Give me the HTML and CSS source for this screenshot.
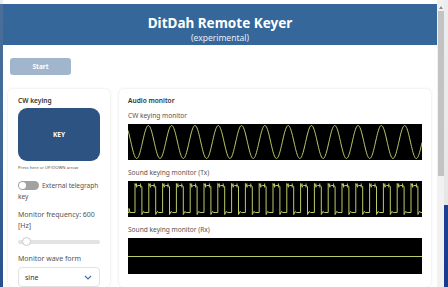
FILE: index.html
```html
<!DOCTYPE html>
<html lang="en">
  <head>
    <meta charset="UTF-8" />
    <meta name="viewport" content="width=device-width, initial-scale=1.0" />
    <title>DitDah Remote Keyer</title>
    <link rel="stylesheet" href="styles.css">
  </head>
  <body>
    <div class="desk">
      <div class="edge-left"></div>
      <div class="win">
        <header class="hero">
          <h1>DitDah Remote Keyer</h1>
          <p>(experimental)</p>
        </header>
        <main class="content">
          <button class="start">Start</button>
          <div class="panels">
            <section class="card side">
              <h2>CW keying</h2>
              <button class="key">KEY</button>
              <p class="hint">Press here or UP/DOWN arrow</p>
              <label class="toggle-row"><span class="toggle"><span class="knob"></span></span>External telegraph key</label>
              <p class="field">Monitor frequency: 600 [Hz]</p>
              <div class="range"><span class="thumb"></span></div>
              <p class="field">Monitor wave form</p>
              <div class="select">
                <span>sine</span>
                <svg width="8" height="5" viewBox="0 0 8 5"><path d="M1 1l3 3 3-3" fill="none" stroke="#4a6fa5" stroke-width="1.2"/></svg>
              </div>
            </section>
            <section class="card monitor">
              <h2>Audio monitor</h2>
              <div class="scope">
                <p>CW keying monitor</p>
                <canvas id="cw" width="294" height="36"></canvas>
              </div>
              <div class="scope">
                <p>Sound keying monitor (Tx)</p>
                <canvas id="tx" width="294" height="36"></canvas>
              </div>
              <div class="scope">
                <p>Sound keying monitor (Rx)</p>
                <canvas id="rx" width="294" height="36"></canvas>
              </div>
            </section>
          </div>
        </main>
      </div>
      <div class="scrollbar">
        <span class="arrow"></span>
        <span class="bar"></span>
      </div>
      <div class="edge-right"></div>
    </div>
    <script src="script.js"></script>
  </body>
</html>
```

FILE: styles.css
```css
@charset 'utf-8';
* {
  margin: 0;
  padding: 0;
  box-sizing: border-box;
}

body {
  width: 448px;
  height: 287px;
  overflow: hidden;
  font-family: "Noto Sans", "Open Sans", sans-serif;
  color: #3a3a3a;
  background: #fff;
}

.desk {
  display: flex;
  height: 287px;
}
.edge-left {
  width: 3px;
  background: linear-gradient(#e9edf2 0, #e9edf2 4px, #4b6f99 4px, #3d6896 50%, #2a4f8e 100%);
}
.edge-right {
  width: 4px;
  background: linear-gradient(#ededed 0, #e6e6e6 205px, #1d3f93 205px, #1a3a8c 100%);
}
.scrollbar {
  width: 7px;
  background: #f1f1f1;
  display: flex;
  flex-direction: column;
  align-items: center;
}
.arrow {
  margin-top: 6px;
  width: 0;
  height: 0;
  border-left: 2px solid transparent;
  border-right: 2px solid transparent;
  border-bottom: 3px solid #8a8a8a;
}
.bar {
  margin-top: 2px;
  width: 6px;
  height: 165px;
  background: #c3c3c3;
}

.win {
  flex: 1;
  padding-top: 4px;
  background: #fff;
  display: flex;
  flex-direction: column;
}

.hero {
  height: 48px;
  background: #35679b;
  color: #fff;
  text-align: center;
  padding-top: 11px;
}
.hero h1 {
  font-size: 13.5px;
  line-height: 17px;
  font-weight: 700;
}
.hero p {
  font-size: 8.5px;
  line-height: 11px;
  color: #e6edf5;
}

.content {
  padding: 7px 6px 0 5px;
}
.start {
  margin-left: 2px;
  width: 61px;
  height: 17px;
  border: 0;
  border-radius: 3px;
  background: #a1b5cd;
  color: #fff;
  font: 700 6.5px "Noto Sans", sans-serif;
}

.panels {
  display: flex;
  gap: 9px;
  margin-top: 14px;
}
.card {
  background: #fff;
  border-radius: 5px;
  box-shadow: 0 0 3px rgba(0, 0, 0, 0.12);
  padding: 6px 9px 10px;
}
.card h2 {
  font-size: 6.6px;
  line-height: 11px;
  font-weight: 600;
  color: #333;
}

.side {
  width: 102px;
  padding: 6px 10px 0;
}
.key {
  display: block;
  margin-top: 2px;
  width: 82px;
  height: 53px;
  border: 0;
  border-radius: 9px;
  background: #2c5381;
  color: #fff;
  font: 700 6.5px "Noto Sans", sans-serif;
}
.hint {
  margin-top: 3px;
  font-size: 4.2px;
  line-height: 7px;
  color: #555;
  white-space: nowrap;
}
.toggle-row {
  display: block;
  margin-top: 9px;
  margin-right: -3px;
  font-size: 6.6px;
  letter-spacing: -0.05px;
  line-height: 11px;
  color: #555;
}
.toggle {
  display: inline-flex;
  vertical-align: -1px;
  margin-right: 3px;
  width: 21px;
  height: 9px;
  border-radius: 5px;
  background: #a2a2a2;
  align-items: center;
  padding-left: 1px;
}
.knob {
  width: 7px;
  height: 7px;
  border-radius: 50%;
  background: #fff;
}
.field {
  margin-top: 7px;
  font-size: 7px;
  line-height: 11px;
  color: #555;
}
.range {
  position: relative;
  margin-top: 9px;
  height: 4px;
  border-radius: 2px;
  background: #e3e3e3;
}
.range .thumb {
  position: absolute;
  left: 4px;
  top: -3px;
  width: 9px;
  height: 9px;
  border-radius: 50%;
  background: #fff;
  border: 1px solid #c9c9c9;
}
.range + .field {
  margin-top: 9px;
}
.select {
  margin-top: 3px;
  height: 20px;
  border: 1px solid #e2e2e2;
  border-radius: 4px;
  display: flex;
  align-items: center;
  justify-content: space-between;
  padding: 0 7px 0 6px;
  font-size: 7px;
  color: #333;
}

.monitor {
  flex: 1;
}
.scope {
  margin-top: 7px;
}
.scope:first-of-type {
  margin-top: 4px;
}
.scope p {
  font-size: 6.6px;
  line-height: 12px;
  margin-bottom: 2px;
  color: #555;
}
.scope canvas {
  display: block;
  width: 294px;
  height: 36px;
  background: #000;
}
```

FILE: script.js
```js
const WAVE_COLOR = "#bccb6a";

const setup = (id) => {
  const canvas = document.getElementById(id);
  const ctx = canvas.getContext("2d");
  ctx.fillStyle = "#000";
  ctx.fillRect(0, 0, canvas.width, canvas.height);
  ctx.strokeStyle = WAVE_COLOR;
  ctx.lineWidth = 1;
  return ctx;
};

// CW 모니터: 사인파
const drawSine = () => {
  const ctx = setup("cw");
  ctx.beginPath();
  for (let x = 0; x <= 294; x += 0.5) {
    const y = 18 + 16.5 * Math.cos((2 * Math.PI * (x - 8.7)) / 23.3);
    x === 0 ? ctx.moveTo(x, y) : ctx.lineTo(x, y);
  }
  ctx.stroke();
};

// Tx 모니터: 사각파
const drawSquare = () => {
  const ctx = setup("tx");
  const period = 13.8;
  const hi = 4.5;
  const lo = 31.5;
  ctx.beginPath();
  ctx.moveTo(0, lo);
  ctx.lineTo(1, lo);
  ctx.lineTo(1, lo - 4);
  ctx.lineTo(2, lo);
  for (let k = 0; k < 22; k++) {
    const x0 = 7 + k * period;
    const x1 = x0 + period / 2;
    ctx.lineTo(x0, lo);
    ctx.lineTo(x0, hi - 2);
    ctx.lineTo(x0 + 1.5, hi + 1);
    ctx.lineTo(x0 + 3, hi);
    ctx.lineTo(x1 - 1.5, hi);
    ctx.lineTo(x1, hi + 1);
    ctx.lineTo(x1, lo + 2);
    ctx.lineTo(x1 + 1.5, lo - 1);
    ctx.lineTo(x1 + 3, lo);
  }
  ctx.stroke();
  ctx.beginPath();
  for (let k = 0; k < 22; k++) {
    const x0 = 7 + k * period;
    ctx.moveTo(x0 + 1.5, hi - 2);
    ctx.lineTo(x0 + 1.5, hi + 2);
    ctx.moveTo(x0 + 5.4, hi - 2);
    ctx.lineTo(x0 + 5.4, hi + 2);
  }
  ctx.stroke();
};

// Rx 모니터: 무신호
const drawFlat = () => {
  const ctx = setup("rx");
  ctx.beginPath();
  ctx.moveTo(0, 18.5);
  ctx.lineTo(294, 18.5);
  ctx.stroke();
};

drawSine();
drawSquare();
drawFlat();
```
